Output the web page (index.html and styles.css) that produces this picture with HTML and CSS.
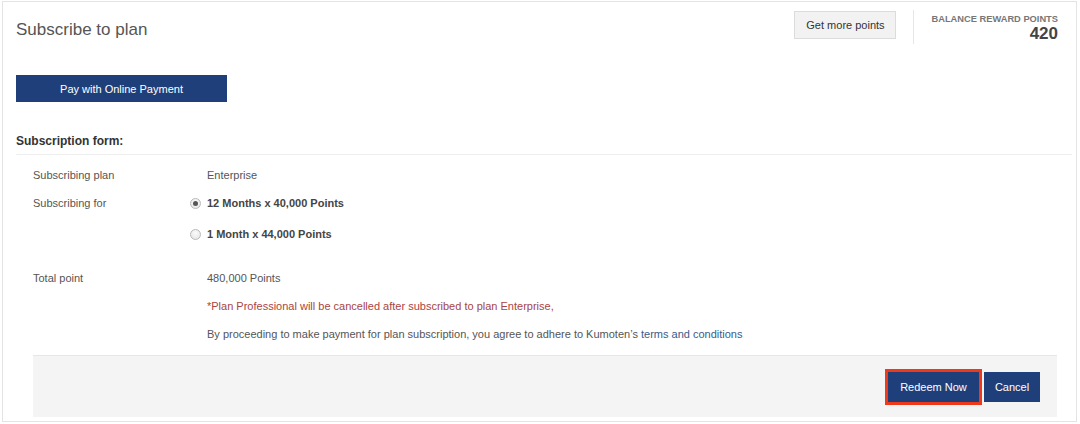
FILE: index.html
```html
<!DOCTYPE html>
<html>
<head>
<meta charset="utf-8">
<link rel="stylesheet" href="styles.css">
</head>
<body>
<div class="card">
  <div class="header">
    <h1 class="title">Subscribe to plan</h1>
    <div class="header-right">
      <button class="btn-light">Get more points</button>
      <div class="balance">
        <div class="balance-label">BALANCE REWARD POINTS</div>
        <div class="balance-value">420</div>
      </div>
    </div>
  </div>

  <div class="pay-wrap">
    <button class="btn-primary btn-pay">Pay with Online Payment</button>
  </div>

  <div class="form-title">Subscription form:</div>

  <div class="form-body">
    <div class="row">
      <div class="label">Subscribing plan</div>
      <div class="value">Enterprise</div>
    </div>
    <div class="row">
      <div class="label">Subscribing for</div>
      <div class="value options">
        <label class="option"><span class="radio checked"></span><b>12 Months x 40,000 Points</b></label>
        <label class="option opt2"><span class="radio"></span><b>1 Month x 44,000 Points</b></label>
      </div>
    </div>
    <div class="row total">
      <div class="label">Total point</div>
      <div class="value">480,000 Points</div>
    </div>
    <div class="row">
      <div class="label"></div>
      <div class="value warn">*Plan Professional will be cancelled after subscribed to plan Enterprise,</div>
    </div>
    <div class="row">
      <div class="label"></div>
      <div class="value">By proceeding to make payment for plan subscription, you agree to adhere to Kumoten’s <a class="link" href="#">terms and conditions</a></div>
    </div>

    <div class="footer">
      <button class="btn-primary btn-redeem">Redeem Now</button>
      <button class="btn-primary btn-cancel">Cancel</button>
    </div>
  </div>
</div>
</body>
</html>
```

FILE: styles.css
```css
* { box-sizing: border-box; }

body {
  margin: 0;
  background: #fff;
  font-family: "Liberation Sans", Arial, sans-serif;
  color: #555;
}

.card {
  margin: 1px 0 0 2px;
  width: 1075px;
  height: 421px;
  border: 1px solid #e4e4e4;
  background: #fff;
}

.header {
  display: flex;
  justify-content: space-between;
  align-items: flex-start;
  height: 45px;
  padding: 9px 18px 0 13px;
}

.title {
  margin: 9px 0 0;
  font-size: 17px;
  line-height: 20px;
  font-weight: normal;
  color: #555;
}

.header-right {
  display: flex;
  align-items: flex-start;
}

button {
  font-family: "Liberation Sans", Arial, sans-serif;
  cursor: pointer;
}

.btn-light {
  height: 28px;
  width: 102px;
  padding: 0;
  font-size: 11px;
  color: #333;
  background: #f2f2f2;
  border: 1px solid #dcdcdc;
  border-radius: 0;
}

.balance {
  margin: -1px 0 0 17px;
  height: 34px;
  padding-left: 17px;
  border-left: 1px solid #e6e6e6;
  text-align: right;
}

.balance-label {
  margin-top: 3px;
  font-size: 9.3px;
  line-height: 12px;
  font-weight: bold;
  color: #777;
}

.balance-value {
  font-size: 17px;
  line-height: 18px;
  font-weight: bold;
  color: #444;
}

.pay-wrap {
  padding: 28px 0 0 13px;
}

.btn-primary {
  background: #1f3f7b;
  color: #fff;
  border: none;
  border-radius: 0;
  font-size: 11px;
}

.btn-pay {
  width: 211px;
  height: 27px;
  padding: 0;
}

.form-title {
  margin: 31px 4px 0 13px;
  padding-bottom: 5px;
  border-bottom: 1px solid #eeeeee;
  font-size: 12px;
  line-height: 16px;
  font-weight: bold;
  color: #333;
}

.form-body {
  padding: 6px 19px 0 30px;
}

.row {
  display: grid;
  grid-template-columns: 174px 1fr;
  font-size: 11px;
  line-height: 28px;
  color: #555;
}

.row.total {
  margin-top: 16px;
}

.options {
  display: flex;
  flex-direction: column;
}

.option {
  display: flex;
  align-items: center;
  margin-left: -17px;
  height: 28px;
  color: #444;
}

.option.opt2 {
  height: 31px;
  padding-top: 3px;
}

.option b {
  font-weight: bold;
}

.radio {
  width: 11px;
  height: 11px;
  margin-right: 6px;
  border: 1px solid #b9b9b9;
  border-radius: 50%;
  background: radial-gradient(circle at 50% 35%, #fbfbfb, #e2e2e2);
  display: inline-flex;
  align-items: center;
  justify-content: center;
}

.radio.checked::after {
  content: "";
  width: 5px;
  height: 5px;
  border-radius: 50%;
  background: #555;
}

.warn {
  color: #a94442;
}

.link {
  color: #3a5a8a;
  text-decoration: none;
}

.footer {
  margin-top: 7px;
  height: 62px;
  background: #f4f4f4;
  border-top: 1px solid #e6e6e6;
  display: flex;
  justify-content: flex-end;
  align-items: center;
  padding-right: 17px;
}

.btn-redeem {
  width: 91px;
  height: 30px;
  padding: 0;
  outline: 3px solid #ee3a1a;
  outline-offset: 0;
}

.btn-cancel {
  width: 56px;
  height: 30px;
  padding: 0;
  margin-left: 5px;
}
```
